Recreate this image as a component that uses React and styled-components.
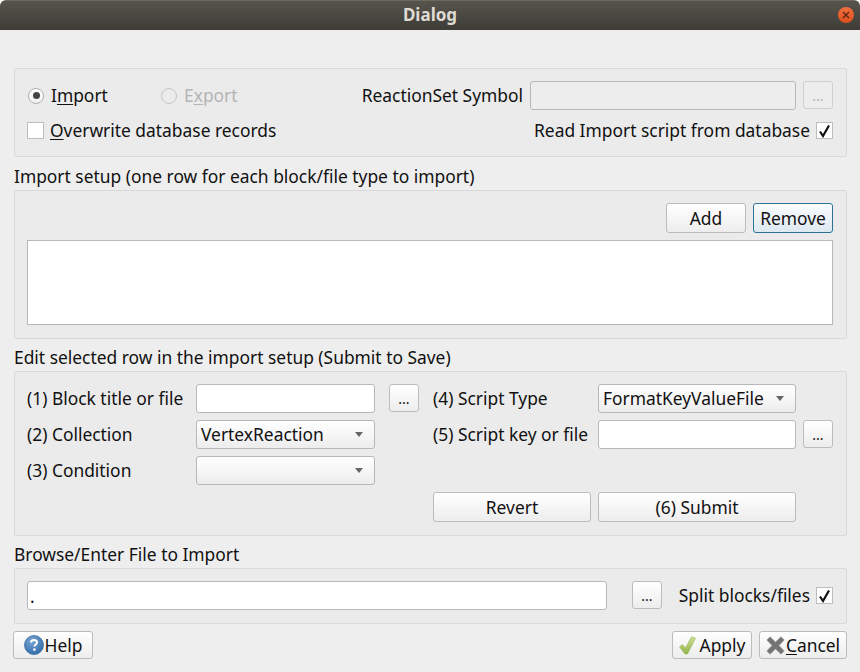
import styled, { createGlobalStyle } from "styled-components";

const GlobalStyle = createGlobalStyle`
  html, body {
    margin: 0;
    padding: 0;
    background: #fff;
  }
  * {
    box-sizing: border-box;
  }
`;

const Window = styled.div`
  width: 860px;
  height: 672px;
  overflow: hidden;
  border-radius: 6px 6px 0 0;
  background: #eeeeee;
  color: #111;
  font-family: "Noto Sans", sans-serif;
  font-size: 17.4px;
  line-height: 23px;
`;

const TitleBar = styled.div`
  position: relative;
  height: 30px;
  background: linear-gradient(#57544c, #3d3c37);
  border-top: 1px solid #6b6860;
  color: #dfdbd2;
  font-weight: 700;
  font-size: 17px;
  line-height: 28px;
  text-align: center;
`;

const CloseButton = styled.div`
  position: absolute;
  right: 6px;
  top: 6px;
  width: 16px;
  height: 16px;
  border-radius: 50%;
  background: linear-gradient(#f0703e, #dc4f1e);
  display: flex;
  align-items: center;
  justify-content: center;
`;

const Content = styled.div`
  padding: 38px 13px 0;
`;

const Panel = styled.div`
  margin-left: 1px;
  background: #ebebeb;
  border: 1px solid #d9d9d9;
  border-radius: 2px;
  padding: 12px 13px 12px 12px;
  height: ${props => props.$height}px;
`;

const SectionLabel = styled.div`
  margin-left: 1px;
  height: ${props => props.$height || 33}px;
  padding-top: ${props => props.$top || 8}px;
  white-space: nowrap;
`;

const Row = styled.div`
  display: flex;
  align-items: center;
  height: 29px;
`;

const CheckRow = styled(Row)`
  justify-content: space-between;
  margin-top: 7px;
  height: 27px;
`;

const RadioItem = styled.label`
  display: flex;
  align-items: center;
  gap: 7px;
  width: ${props => props.$width}px;
  margin-left: 1px;
  color: ${props => (props.$disabled ? "#b4b4b4" : "#111")};
`;

const RadioMark = styled.span`
  width: 16px;
  height: 16px;
  border-radius: 50%;
  border: 1px solid ${props => (props.$disabled ? "#c4c4c4" : "#b0b0b0")};
  background: ${props => (props.$disabled ? "#ebebeb" : "linear-gradient(#fff, #f0f0f0)")};
  display: flex;
  align-items: center;
  justify-content: center;

  &::after {
    content: "";
    display: ${props => (props.$checked ? "block" : "none")};
    width: 7px;
    height: 7px;
    border-radius: 50%;
    background: #444;
  }
`;

const Key = styled.span`
  text-decoration: underline;
  text-decoration-thickness: 1px;
  text-underline-offset: 2px;
`;

const CheckItem = styled.label`
  display: flex;
  align-items: center;
  gap: 6px;
`;

const Checkbox = styled.span`
  width: 17px;
  height: 17px;
  background: #fff;
  border: 1px solid #bdbdbd;
  display: flex;
  align-items: center;
  justify-content: center;
`;

const FieldLabel = styled.span`
  white-space: nowrap;
  margin-right: 7px;
  margin-left: auto;
`;

const TextField = styled.input`
  display: block;
  width: ${props => (props.$width ? `${props.$width}px` : "100%")};
  height: 29px;
  padding: 0 2px;
  border: 1px solid #b8b8b8;
  border-radius: 3px;
  background: ${props => (props.disabled ? "#ededed" : "#fff")};
  font: inherit;
  color: #111;
  outline: none;
`;

const Button = styled.button`
  display: flex;
  align-items: center;
  justify-content: center;
  gap: ${props => props.$gap || 0}px;
  height: ${props => props.$height || 30}px;
  width: ${props => (props.$width ? `${props.$width}px` : "auto")};
  padding: 0;
  border: 1px solid ${props => (props.$focused ? "#2f7299" : "#bcbcbc")};
  border-radius: 3px;
  background: ${props =>
    props.$focused ? "linear-gradient(#fbfcfd, #dde8f0)" : "linear-gradient(#ffffff, #ededed)"};
  font: inherit;
  color: #111;
`;

const DotsButton = styled(Button)`
  width: 30px;
  height: 28px;
  flex: none;
  margin-left: ${props => props.$offset || 0}px;
  align-self: flex-start;
  color: ${props => (props.disabled ? "#b4b4b4" : "#111")};
  background: ${props => (props.disabled ? "#ededed" : "linear-gradient(#ffffff, #ededed)")};
  border-color: ${props => (props.disabled ? "#cfcfcf" : "#bcbcbc")};
  font-size: 14px;
`;

const ButtonRow = styled.div`
  display: flex;
  justify-content: flex-end;
  gap: 7px;
  margin-bottom: 7px;
`;

const TableBox = styled.div`
  height: 85px;
  background: #fff;
  border: 1px solid #b8b8b8;
`;

const EditGrid = styled.div`
  display: grid;
  grid-template-columns: 406px 400px;
`;

const EditColumn = styled.div`
  display: flex;
  flex-direction: column;
  gap: 7px;
`;

const EditRow = styled.div`
  display: flex;
  align-items: center;
  height: 29px;
`;

const EditLabel = styled.span`
  width: ${props => props.$width}px;
  flex: none;
  white-space: nowrap;
`;

const ComboBox = styled.div`
  display: flex;
  align-items: center;
  width: ${props => props.$width}px;
  height: 29px;
  flex: none;
  padding: 0 11px 0 4px;
  border: 1px solid #b8b8b8;
  border-radius: 3px;
  background: linear-gradient(#ffffff, #ededed);
  white-space: nowrap;

  &::after {
    content: "";
    margin-left: auto;
    width: 0;
    height: 0;
    border-left: 4.5px solid transparent;
    border-right: 4.5px solid transparent;
    border-top: 5px solid #666;
  }
`;

const SubmitRow = styled.div`
  display: flex;
  gap: 7px;
`;

const FileRow = styled.div`
  display: flex;
  align-items: center;
  height: 29px;
`;

const SplitCheck = styled(CheckItem)`
  margin-left: auto;
  white-space: nowrap;
`;

const Footer = styled.div`
  display: flex;
  justify-content: space-between;
  margin-top: 7px;
`;

const FooterRight = styled.div`
  display: flex;
  gap: 7px;
`;

function CheckMark() {
  return (
    <svg width="13" height="14" viewBox="0 0 13 14">
      <path d="M2 7.5 L5 12 L11 1.5" fill="none" stroke="#111" strokeWidth="2.2" />
    </svg>
  );
}

function HelpIcon() {
  return (
    <svg width="20" height="20" viewBox="0 0 20 20">
      <defs>
        <radialGradient id="helpBlue" cx="40%" cy="30%" r="75%">
          <stop offset="0" stopColor="#7aa7d4" />
          <stop offset="1" stopColor="#2f6aa8" />
        </radialGradient>
      </defs>
      <circle cx="10" cy="10" r="9.5" fill="url(#helpBlue)" stroke="#3b6c9f" strokeWidth="0.8" />
      <path d="M7 7.6 C7 5.8 8.4 5 10 5 C11.8 5 13 6 13 7.5 C13 9.4 10.4 9.6 10.4 11.6" fill="none" stroke="#fff" strokeWidth="2" />
      <circle cx="10.4" cy="14.6" r="1.3" fill="#fff" />
    </svg>
  );
}

function ApplyIcon() {
  return (
    <svg width="17" height="19" viewBox="0 0 17 19">
      <defs>
        <linearGradient id="applyGreen" x1="0" y1="0" x2="0" y2="1">
          <stop offset="0" stopColor="#cfe09a" />
          <stop offset="1" stopColor="#8fb347" />
        </linearGradient>
      </defs>
      <path d="M0.5 11 L3.5 8.5 L6.5 12 L12.5 0.8 L16.5 2.2 L8.5 18 L6 18 Z" fill="url(#applyGreen)" stroke="#a3bb68" strokeWidth="0.7" />
    </svg>
  );
}

function CancelIcon() {
  return (
    <svg width="19" height="19" viewBox="0 0 19 19">
      <path d="M0.8 4 L4 0.8 L9.5 6 L15 0.8 L18.2 4 L13 9.5 L18.2 15 L15 18.2 L9.5 13 L4 18.2 L0.8 15 L6 9.5 Z" fill="#737373" stroke="#999" strokeWidth="0.7" />
    </svg>
  );
}

export default function App() {
  return (
    <Window>
      <GlobalStyle />
      <TitleBar>
        Dialog
        <CloseButton>
          <svg width="8" height="8" viewBox="0 0 8 8">
            <path d="M1 1 L7 7 M7 1 L1 7" stroke="#5a2410" strokeWidth="1.3" />
          </svg>
        </CloseButton>
      </TitleBar>
      <Content>
        <Panel $height={89}>
          <Row>
            <RadioItem $width={132}>
              <RadioMark $checked />
              <span>I<Key>m</Key>port</span>
            </RadioItem>
            <RadioItem $width={150} $disabled>
              <RadioMark $disabled />
              <span>E<Key>x</Key>port</span>
            </RadioItem>
            <FieldLabel>ReactionSet Symbol</FieldLabel>
            <TextField disabled $width={266} />
            <DotsButton disabled $offset={7}>...</DotsButton>
          </Row>
          <CheckRow>
            <CheckItem>
              <Checkbox />
              <span><Key>O</Key>verwrite database records</span>
            </CheckItem>
            <CheckItem>
              <span>Read Import script from database</span>
              <Checkbox><CheckMark /></Checkbox>
            </CheckItem>
          </CheckRow>
        </Panel>

        <SectionLabel>Import setup (one row for each block/file type to import)</SectionLabel>
        <Panel $height={149}>
          <ButtonRow>
            <Button $width={80}>Add</Button>
            <Button $width={80} $focused>Remove</Button>
          </ButtonRow>
          <TableBox />
        </Panel>

        <SectionLabel $height={32} $top={7}>Edit selected row in the import setup (Submit to Save)</SectionLabel>
        <Panel $height={165}>
          <EditGrid>
            <EditColumn>
              <EditRow>
                <EditLabel $width={169}>(1) Block title or file</EditLabel>
                <TextField $width={179} />
                <DotsButton $offset={14}>...</DotsButton>
              </EditRow>
              <EditRow>
                <EditLabel $width={169}>(2) Collection</EditLabel>
                <ComboBox $width={179}>VertexReaction</ComboBox>
              </EditRow>
              <EditRow>
                <EditLabel $width={169}>(3) Condition</EditLabel>
                <ComboBox $width={179} />
              </EditRow>
            </EditColumn>
            <EditColumn>
              <EditRow>
                <EditLabel $width={165}>(4) Script Type</EditLabel>
                <ComboBox $width={198}>FormatKeyValueFile</ComboBox>
              </EditRow>
              <EditRow>
                <EditLabel $width={165}>(5) Script key or file</EditLabel>
                <TextField $width={198} />
                <DotsButton $offset={7}>...</DotsButton>
              </EditRow>
              <EditRow />
              <SubmitRow>
                <Button $width={158}>Revert</Button>
                <Button $width={198}>(6) Submit</Button>
              </SubmitRow>
            </EditColumn>
          </EditGrid>
        </Panel>

        <SectionLabel $height={32} $top={7}>Browse/Enter File to Import</SectionLabel>
        <Panel $height={56}>
          <FileRow>
            <TextField $width={580} defaultValue="." />
            <DotsButton $offset={25}>...</DotsButton>
            <SplitCheck>
              <span>Split blocks/files</span>
              <Checkbox><CheckMark /></Checkbox>
            </SplitCheck>
          </FileRow>
        </Panel>

        <Footer>
          <Button $width={80} $height={28} $gap={1}><HelpIcon />Help</Button>
          <FooterRight>
            <Button $width={80} $height={28} $gap={4}><ApplyIcon />Apply</Button>
            <Button $width={88} $height={28} $gap={1}><CancelIcon /><span><Key>C</Key>ancel</span></Button>
          </FooterRight>
        </Footer>
      </Content>
    </Window>
  );
}
